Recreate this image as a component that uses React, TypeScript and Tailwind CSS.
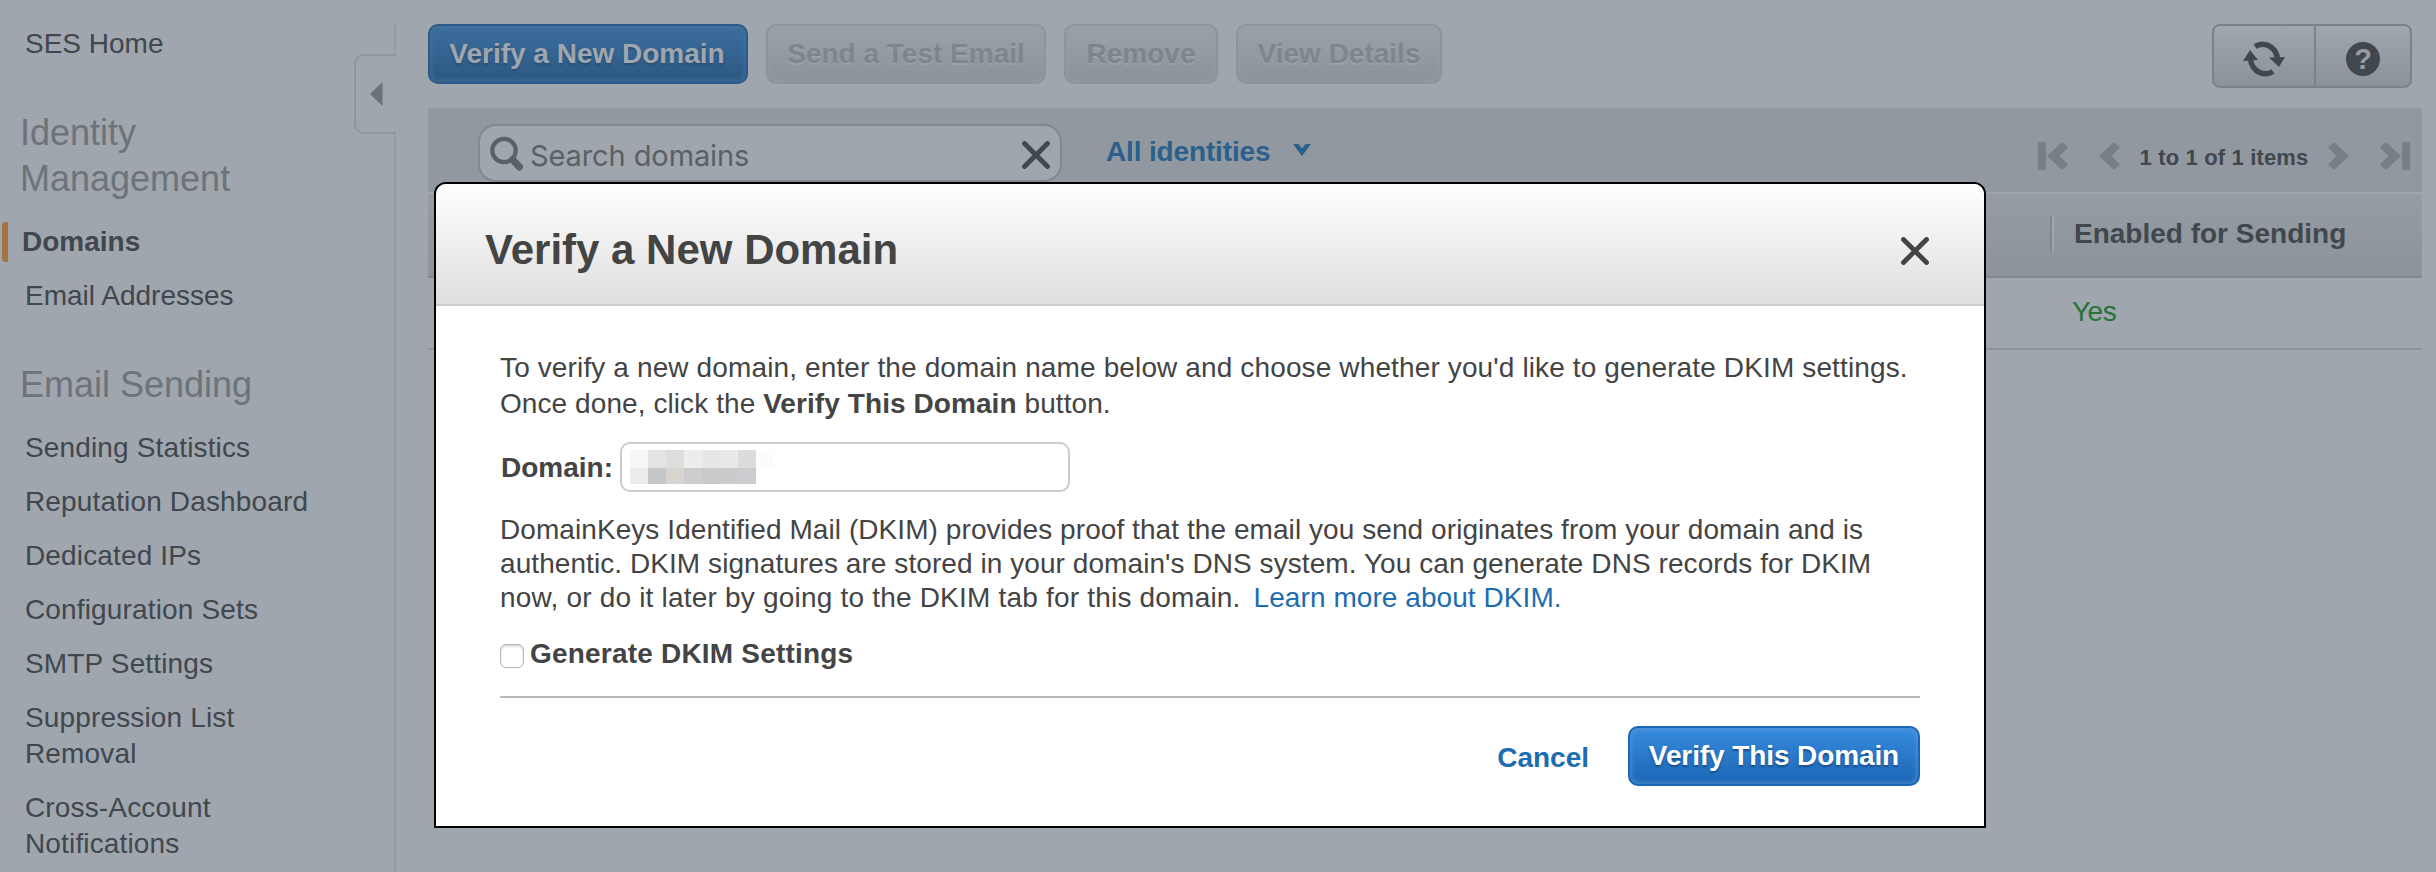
import React from "react";

const MANAGEMENT = ["Domains", "Email Addresses"];
const SENDING = [
  "Sending Statistics",
  "Reputation Dashboard",
  "Dedicated IPs",
  "Configuration Sets",
  "SMTP Settings",
  "Suppression List Removal",
  "Cross-Account Notifications",
];

function Sidebar() {
  return (
    <aside className="flex w-[396px] shrink-0">
      <nav className="flex w-[354px] flex-col pt-[26px] text-[28px] leading-[36px] text-[#40474d]">
        <a className="pl-[25px]">SES Home</a>
        <h2 className="mt-12 w-[260px] pl-5 text-[36px] leading-[46px] text-[#6c747a]">Identity Management</h2>
        <ul className="mt-[22px] flex flex-col gap-[18px]">
          {MANAGEMENT.map((item, i) =>
            i === 0 ? (
              <li key={item} className="flex items-center font-bold">
                <span className="-my-1 ml-0.5 h-10 w-1.5 rounded-l-[4px] bg-[#a5743f]" />
                <span className="pl-3.5">{item}</span>
              </li>
            ) : (
              <li key={item} className="pl-[25px]">{item}</li>
            )
          )}
        </ul>
        <h2 className="mt-12 pl-5 text-[36px] leading-[46px] text-[#6c747a]">Email Sending</h2>
        <ul className="mt-[22px] flex w-[320px] flex-col gap-[18px] tracking-[0.15px]">
          {SENDING.map((item) => (
            <li key={item} className="pl-[25px]">{item}</li>
          ))}
        </ul>
      </nav>
      <div className="flex w-[42px] flex-col items-end pt-6">
        <div className="h-[30px] w-0.5 bg-[#959ca3]" />
        <div className="flex h-20 w-[42px] items-center rounded-l-[10px] border-2 border-r-0 border-[#8f969d] pl-3.5">
          <svg width="13" height="24" viewBox="0 0 13 24"><path d="M0 12 12.500 0v24z" fill="#6b7379" /></svg>
        </div>
        <div className="w-0.5 grow bg-[#959ca3]" />
      </div>
    </aside>
  );
}

function GhostButton({ children, width }: { children: string; width: string }) {
  return (
    <button className={`h-[60px] rounded-[10px] border-2 border-[#8d949b] bg-linear-to-b from-[#9aa1a8] to-[#8c939a] pb-px text-[28px] font-bold text-[#7f868b] shadow-[inset_0_0_6px_#979ea5] [text-shadow:0_2px_0_#9ba2a9] ${width}`}>
      {children}
    </button>
  );
}

function Chevron({ flip = false }: { flip?: boolean }) {
  return (
    <svg width="21" height="28" viewBox="0 0 21 28" className={flip ? "-scale-x-100" : ""}>
      <path d="M15 0l6 5.5L12.500 14l8.500 8.500-6 5.500L0 14z" fill="#777f86" />
    </svg>
  );
}

function Cross({ color, size }: { color: string; size: number }) {
  return (
    <svg width={size} height={size} viewBox="0 0 28 28">
      <path d="M2.5 2.5l23 23M25.5 2.5l-23 23" stroke={color} strokeWidth="4.8" strokeLinecap="round" />
    </svg>
  );
}

function Toolbar() {
  return (
    <div className="flex h-16 gap-[18px] pr-2.5">
      <button className="h-[60px] w-[320px] rounded-[10px] border-2 border-[#2a5a8a] bg-linear-to-b from-[#3d6e9e] to-[#2b5985] pr-0.5 pb-px text-[28px] font-bold text-[#9fa6ad] shadow-[inset_0_0_6px_#4c7699] [text-shadow:0_2px_2px_#2a4d70]">
        Verify a New Domain
      </button>
      <GhostButton width="w-[280px]">Send a Test Email</GhostButton>
      <GhostButton width="w-[154px]">Remove</GhostButton>
      <GhostButton width="w-[206px]">View Details</GhostButton>
      <div className="ml-auto flex h-16 w-[200px] rounded-[8px] border-2 border-[#7b8288] bg-linear-to-b from-[#9fa6ad] to-[#8b9299]">
        <div className="flex w-[102px] items-center justify-center border-r-2 border-[#7b8288] pt-1.5">
          <svg width="42" height="38" viewBox="0 0 42 38" fill="none">
            <path d="M12 6.500C20 1.500 32 5 34.500 18" stroke="#40474d" strokeWidth="5.5" />
            <path d="M30 31.500C22 36.500 10 33 7.500 20" stroke="#40474d" strokeWidth="5.5" />
            <path d="M26 17.500L42 17 36 27z" fill="#40474d" />
            <path d="M0 21L15 20 7 10z" fill="#40474d" />
          </svg>
        </div>
        <div className="flex grow items-center justify-center pt-1.5">
          <div className="flex size-[34px] items-center justify-center rounded-full bg-[#40474d] text-[29px] leading-none font-bold text-[#959ca3]">?</div>
        </div>
      </div>
    </div>
  );
}

function Identities() {
  return (
    <section className="mt-5">
      <div className="flex h-[84px] items-start bg-[#9198a0] pt-4 pl-[50px]">
        <div className="flex h-[58px] w-[584px] items-center rounded-[18px] border-2 border-[#81888f] bg-[#9fa6ad] pr-2.5 pl-2.5">
          <svg width="36" height="36" viewBox="0 0 36 36" fill="none">
            <circle cx="14" cy="15.500" r="11.700" stroke="#596167" strokeWidth="4.2" />
            <path d="M22.500 24.500l7 7.500" stroke="#596167" strokeWidth="7" strokeLinecap="round" />
          </svg>
          <span className="grow pt-[5px] pl-1 font-['Inter','Liberation_Sans',sans-serif] text-[29px] leading-9 tracking-[-0.1px] text-[#596167]">Search domains</span>
          <div className="pt-1"><Cross color="#40474d" size={28} /></div>
        </div>
        <div className="flex items-center pt-2.5 pl-11 text-[28px] leading-[36px] font-bold tracking-[-0.15px] text-[#2b5f8c]">
          All identities
          <svg width="18" height="12" viewBox="0 0 18 12" className="-mt-1 ml-[23px]"><path d="M0 0h5.500L9 4.500 12.500 0H18L9 12z" fill="#2b5f8c" /></svg>
        </div>
        <div className="ml-auto flex items-center pt-[18px] pr-3">
          <span className="mr-[1px] h-7 w-2 bg-[#777f86]" />
          <Chevron />
          <span className="w-[31px]" />
          <Chevron />
          <span className="w-[208px] pt-1 text-center text-[22px] leading-6 font-bold tracking-[0.15px] whitespace-nowrap text-[#40474d]">1 to 1 of 1 items</span>
          <Chevron flip />
          <span className="w-[31px]" />
          <Chevron flip />
          <span className="ml-[1px] h-7 w-2 bg-[#777f86]" />
        </div>
      </div>
      <div className="mt-0.5 flex h-[84px] justify-end border-b-2 border-[#82898f] bg-linear-to-b from-[#959ca3] to-[#8c9399]">
        <div className="flex w-[372px] pt-[22px]">
          <span className="h-9 w-0.5 bg-[#81888e]" />
          <span className="h-9 w-0.5 bg-[#9fa6ad]" />
          <span className="pl-5 text-[28px] leading-[36px] font-bold text-[#40474d]">Enabled for Sending</span>
        </div>
      </div>
      <div className="flex h-[72px] justify-end border-b-2 border-[#8d949b]">
        <span className="w-[350px] pt-4 text-[28px] leading-[36px] tracking-[-0.5px] text-[#267336]">Yes</span>
      </div>
    </section>
  );
}

const MOSAIC = [
  "bg-[#f6f6f6]", "bg-[#e4e4e4]", "bg-[#dedddc]", "bg-[#eceeee]", "bg-[#e7e7e7]", "bg-[#e9e9e9]", "bg-[#dcdcdc]", "bg-[#fbfdfd]",
  "bg-[#ececec]", "bg-[#c5c7c9]", "bg-[#d8d4cf]", "bg-[#cccdcf]", "bg-[#cacaca]", "bg-[#cbcbcc]", "bg-[#cbcccf]", "bg-white",
];

function VerifyDialog() {
  return (
    <div role="dialog" className="absolute top-[182px] left-[434px] flex h-[646px] w-[1552px] flex-col overflow-hidden rounded-t-[12px] border-2 border-black bg-white text-[28px] text-[#444]">
      <header className="flex h-[122px] shrink-0 items-center justify-between border-b-2 border-[#ccc] bg-linear-to-b from-white to-[#dfdfdf] pr-[55px] pl-[49px]">
        <h1 className="pt-3 text-[42px] leading-[52px] font-bold">Verify a New Domain</h1>
        <div className="pt-3.5"><Cross color="#444" size={28} /></div>
      </header>
      <div className="flex flex-col px-16 pt-[44px]">
        <p className="leading-[36px] tracking-[0.13px] whitespace-nowrap">
          To verify a new domain, enter the domain name below and choose whether you'd like to generate DKIM settings.
          <br />
          <span className="tracking-[0.08px]">Once done, click the <b>Verify This Domain</b> button.</span>
        </p>
        <div className="mt-5 flex h-[50px] items-center">
          <b className="w-[120px] pt-0.5 pl-px">Domain:</b>
          <div className="h-[50px] w-[450px] rounded-[10px] border-2 border-[#ccc] pt-1.5 pl-2">
            <div className="grid w-36 grid-cols-8 grid-rows-[18px_16px]">
              {MOSAIC.map((c, i) => <span key={i} className={c} />)}
            </div>
          </div>
        </div>
        <p className="mt-[21px] leading-[34px] tracking-[0.07px] whitespace-nowrap">
          DomainKeys Identified Mail (DKIM) provides proof that the email you send originates from your domain and is
          <br />
          authentic. DKIM signatures are stored in your domain's DNS system. You can generate DNS records for DKIM
          <br />
          <span className="tracking-[0.2px]">now, or do it later by going to the DKIM tab for this domain. </span>
          <a className="ml-[5px] text-[#1b6cb0]">Learn more about DKIM.</a>
        </p>
        <div className="mt-[21px] flex h-9 items-center">
          <span className="mt-1 size-6 rounded-[6px] border border-[#b5b5b5] shadow-[inset_0_2px_2px_#ddd]" />
          <b className="pl-1.5 tracking-[0.2px]">Generate DKIM Settings</b>
        </div>
        <footer className="mt-[24px] flex justify-end border-t-2 border-[#b8b8b8] pt-7">
          <a className="pt-3.5 pr-[39px] leading-[36px] font-bold text-[#1b6cb0]">Cancel</a>
          <button className="h-[60px] w-[292px] rounded-[10px] border-2 border-[#1d66b7] bg-linear-to-b from-[#388bdd] to-[#1b65b5] pb-px font-bold tracking-[-0.1px] text-white shadow-[inset_0_0_6px_#5a9bd5] [text-shadow:0_2px_2px_#1a4d85]">
            Verify This Domain
          </button>
        </footer>
      </div>
    </div>
  );
}

export default function App() {
  return (
    <div className="relative flex h-[872px] w-[2436px] overflow-hidden bg-[#9fa6ad] font-['Liberation_Sans',Arial,sans-serif]">
      <Sidebar />
      <main className="ml-8 w-[1994px] pt-6">
        <Toolbar />
        <Identities />
      </main>
      <VerifyDialog />
    </div>
  );
}
